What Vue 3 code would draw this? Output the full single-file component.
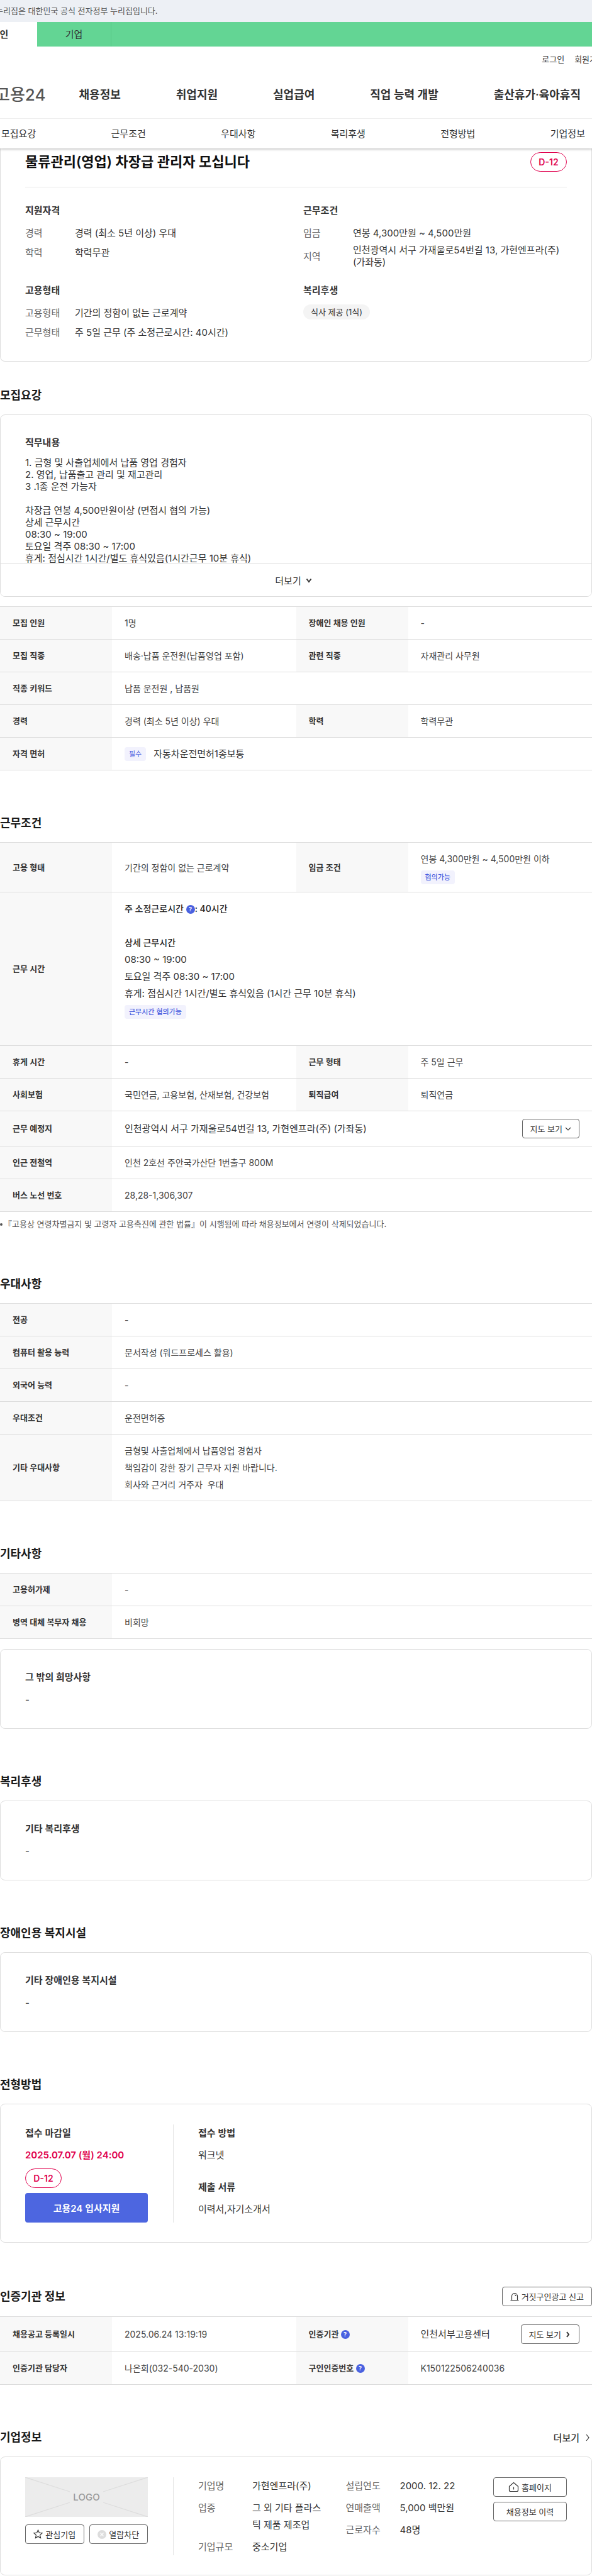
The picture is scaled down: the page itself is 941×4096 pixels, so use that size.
<template>
  <div class="page">
    <header class="header">
      <p class="gov-bar">누리집은 대한민국 공식 전자정부 누리집입니다.</p>

      <div class="member-tabs">
        <a href="#" class="member-tab active">개인</a>
        <a href="#" class="member-tab">기업</a>
      </div>

      <div class="util">
        <a href="#">로그인</a>
        <a href="#">회원가입</a>
      </div>

      <div class="gnb">
        <a href="#" class="logo">고용24</a>
        <nav class="gnb-menu">
          <a v-for="menu in menus" :key="menu" href="#">{{ menu }}</a>
        </nav>
      </div>

      <nav class="anchor-menu">
        <a v-for="anchor in anchors" :key="anchor" href="#">{{ anchor }}</a>
      </nav>
    </header>

    <main>
      <!-- 공고 요약 -->
      <section class="card summary">
        <div class="summary-title">
          <h1>물류관리(영업) 차장급 관리자 모십니다</h1>
          <span class="d-day">D-12</span>
        </div>
        <div class="summary-grid">
          <div v-for="group in summary" :key="group.title">
            <h3>{{ group.title }}</h3>
            <dl v-if="group.rows" class="summary-list">
              <div v-for="row in group.rows" :key="row.label">
                <dt>{{ row.label }}</dt>
                <dd>{{ row.value }}</dd>
              </div>
            </dl>
            <span v-else class="pill">{{ group.tag }}</span>
          </div>
        </div>
      </section>

      <!-- 모집요강 -->
      <section class="section first">
        <h2>모집요강</h2>
        <div class="card duty">
          <div class="duty-body">
            <h3>직무내용</h3>
            <p>{{ dutyText }}</p>
          </div>
          <button type="button" class="more-button">
            더보기
            <svg width="10" height="10" viewBox="0 0 10 10"><path d="M1.5 2.500l3.500 4.500 3.500-4.500" /></svg>
          </button>
        </div>
        <table class="info">
          <colgroup><col class="head" /><col /><col class="head" /><col /></colgroup>
          <tbody>
            <tr>
              <th scope="row">모집 인원</th><td>1명</td>
              <th scope="row">장애인 채용 인원</th><td>-</td>
            </tr>
            <tr>
              <th scope="row">모집 직종</th><td>배송·납품 운전원(납품영업 포함)</td>
              <th scope="row">관련 직종</th><td>자재관리 사무원</td>
            </tr>
            <tr>
              <th scope="row">직종 키워드</th><td colspan="3">납품 운전원 , 납품원</td>
            </tr>
            <tr>
              <th scope="row">경력</th><td>경력 (최소 5년 이상) 우대</td>
              <th scope="row">학력</th><td>학력무관</td>
            </tr>
            <tr>
              <th scope="row">자격 면허</th>
              <td colspan="3">
                <div class="cell-flex">
                  <span class="badge light">필수</span>
                  <span class="large">자동차운전면허1종보통</span>
                </div>
              </td>
            </tr>
          </tbody>
        </table>
      </section>

      <!-- 근무조건 -->
      <section class="section">
        <h2>근무조건</h2>
        <table class="info">
          <colgroup><col class="head" /><col /><col class="head" /><col /></colgroup>
          <tbody>
            <tr>
              <th scope="row">고용 형태</th><td>기간의 정함이 없는 근로계약</td>
              <th scope="row">임금 조건</th>
              <td>
                <p>연봉 4,300만원 ~ 4,500만원 이하</p>
                <span class="badge below">협의가능</span>
              </td>
            </tr>
            <tr>
              <th scope="row">근무 시간</th>
              <td colspan="3">
                <div class="work-time">
                  <p class="strong">주 소정근로시간 <button type="button" class="help">?</button>: 40시간</p>
                  <p class="strong detail">상세 근무시간</p>
                  <p class="large">08:30 ~ 19:00</p>
                  <p class="large">토요일 격주 08:30 ~ 17:00</p>
                  <p class="large">휴게: 점심시간 1시간/별도 휴식있음 (1시간 근무 10분 휴식)</p>
                  <span class="badge below">근무시간 협의가능</span>
                </div>
              </td>
            </tr>
            <tr>
              <th scope="row">휴게 시간</th><td>-</td>
              <th scope="row">근무 형태</th><td>주 5일 근무</td>
            </tr>
            <tr>
              <th scope="row">사회보험</th><td>국민연금, 고용보험, 산재보험, 건강보험</td>
              <th scope="row">퇴직급여</th><td>퇴직연금</td>
            </tr>
            <tr>
              <th scope="row">근무 예정지</th>
              <td colspan="3">
                <div class="cell-flex between">
                  <span class="large">인천광역시 서구 가재울로54번길 13, 가현엔프라(주) (가좌동)</span>
                  <button type="button" class="line-button">
                    지도 보기
                    <svg width="10" height="10" viewBox="0 0 10 10"><path d="M1 3l4 4 4-4" /></svg>
                  </button>
                </div>
              </td>
            </tr>
            <tr>
              <th scope="row">인근 전철역</th><td colspan="3">인천 2호선 주안국가산단 1번출구 800M</td>
            </tr>
            <tr>
              <th scope="row">버스 노선 번호</th><td colspan="3">28,28-1,306,307</td>
            </tr>
          </tbody>
        </table>
        <ul class="note">
          <li>『고용상 연령차별금지 및 고령자 고용촉진에 관한 법률』이 시행됨에 따라 채용정보에서 연령이 삭제되었습니다.</li>
        </ul>
      </section>

      <!-- 우대사항 / 기타사항 -->
      <section class="section">
        <h2>우대사항</h2>
        <table class="info">
          <colgroup><col class="head" /><col /></colgroup>
          <tbody>
            <tr v-for="row in preferences" :key="row.label">
              <th scope="row">{{ row.label }}</th>
              <td><p v-for="line in row.lines" :key="line">{{ line }}</p></td>
            </tr>
          </tbody>
        </table>
      </section>

      <section class="section">
        <h2>기타사항</h2>
        <table class="info">
          <colgroup><col class="head" /><col /></colgroup>
          <tbody>
            <tr><th scope="row">고용허가제</th><td>-</td></tr>
            <tr><th scope="row">병역 대체 복무자 채용</th><td>비희망</td></tr>
          </tbody>
        </table>
        <div class="card simple after-table">
          <h3>그 밖의 희망사항</h3>
          <p>-</p>
        </div>
      </section>

      <section class="section">
        <h2>복리후생</h2>
        <div class="card simple">
          <h3>기타 복리후생</h3>
          <p>-</p>
        </div>
      </section>

      <section class="section">
        <h2>장애인용 복지시설</h2>
        <div class="card simple">
          <h3>기타 장애인용 복지시설</h3>
          <p>-</p>
        </div>
      </section>

      <!-- 전형방법 -->
      <section class="section">
        <h2>전형방법</h2>
        <div class="card split">
          <div class="split-left">
            <h3>접수 마감일</h3>
            <p class="deadline">2025.07.07 (월) 24:00</p>
            <span class="d-day">D-12</span>
            <button type="button" class="apply">고용24 입사지원</button>
          </div>
          <div class="split-right apply-info">
            <div>
              <h3>접수 방법</h3>
              <p>워크넷</p>
            </div>
            <div>
              <h3>제출 서류</h3>
              <p>이력서,자기소개서</p>
            </div>
          </div>
        </div>
      </section>

      <!-- 인증기관 정보 -->
      <section class="section">
        <div class="section-head">
          <h2>인증기관 정보</h2>
          <button type="button" class="line-button">
            <svg width="14" height="14" viewBox="0 0 14 14"><path d="M2.500 12V6a4.500 4.500 0 0 1 9 0v6M.5 12.500h13M7 4a2 2 0 0 1 2 2" /></svg>
            거짓구인광고 신고
          </button>
        </div>
        <table class="info">
          <colgroup><col class="head" /><col /><col class="head" /><col /></colgroup>
          <tbody>
            <tr>
              <th scope="row">채용공고 등록일시</th><td>2025.06.24 13:19:19</td>
              <th scope="row">인증기관 <button type="button" class="help">?</button></th>
              <td>
                <div class="cell-flex between">
                  <span class="large">인천서부고용센터</span>
                  <button type="button" class="line-button">
                    지도 보기
                    <svg class="bold" width="12" height="12" viewBox="0 0 12 12"><path d="M5 2l3 4-3 4" /></svg>
                  </button>
                </div>
              </td>
            </tr>
            <tr>
              <th scope="row">인증기관 담당자</th><td>나은희(032-540-2030)</td>
              <th scope="row">구인인증번호 <button type="button" class="help">?</button></th><td>K150122506240036</td>
            </tr>
          </tbody>
        </table>
      </section>

      <!-- 기업정보 -->
      <section class="section">
        <div class="section-head">
          <h2>기업정보</h2>
          <a href="#" class="more-link">
            더보기
            <svg width="14" height="14" viewBox="0 0 14 14"><path d="M5 2l4 5-4 5" /></svg>
          </a>
        </div>
        <div class="card split company">
          <div class="split-left">
            <div class="logo-box">
              <svg viewBox="0 0 195 63" preserveAspectRatio="none"><path d="M0 0l71 23M195 0l-71 23M0 63l71-23M195 63l-71-23" /></svg>
              <span>LOGO</span>
            </div>
            <div class="logo-buttons">
              <button type="button" class="line-button">
                <svg width="15" height="15" viewBox="0 0 15 15"><path d="M7.500 1l1.900 4.300 4.600.5-3.400 3.100.9 4.600-4-2.300-4 2.300.9-4.600L1 5.800l4.600-.5z" /></svg>
                관심기업
              </button>
              <button type="button" class="line-button">
                <svg class="block-icon" width="14" height="14" viewBox="0 0 14 14"><circle cx="7" cy="7" r="7" /><path d="M4.500 4.500l5 5M9.500 4.500l-5 5" /></svg>
                열람차단
              </button>
            </div>
          </div>
          <div class="split-right company-info">
            <dl v-for="(list, i) in company" :key="i">
              <div v-for="row in list" :key="row.label">
                <dt>{{ row.label }}</dt>
                <dd>{{ row.value }}</dd>
              </div>
            </dl>
            <div class="company-buttons">
              <button type="button" class="line-button">
                <svg width="17" height="17" viewBox="0 0 17 17"><path d="M1.500 7.500v6a2 2 0 0 0 2 2h10a2 2 0 0 0 2-2v-6L8.500 1.500zM8.500 8.500v4" /></svg>
                홈페이지
              </button>
              <button type="button" class="line-button">채용정보 이력</button>
            </div>
          </div>
        </div>
      </section>
    </main>
  </div>
</template>

<script setup>
const menus = ['채용정보', '취업지원', '실업급여', '직업 능력 개발', '출산휴가·육아휴직']
const anchors = ['모집요강', '근무조건', '우대사항', '복리후생', '전형방법', '기업정보']

// 상단 요약 영역
const summary = [
  {
    title: '지원자격',
    rows: [
      { label: '경력', value: '경력 (최소 5년 이상) 우대' },
      { label: '학력', value: '학력무관' }
    ]
  },
  {
    title: '근무조건',
    rows: [
      { label: '임금', value: '연봉 4,300만원 ~ 4,500만원' },
      { label: '지역', value: '인천광역시 서구 가재울로54번길 13, 가현엔프라(주) (가좌동)' }
    ]
  },
  {
    title: '고용형태',
    rows: [
      { label: '고용형태', value: '기간의 정함이 없는 근로계약' },
      { label: '근무형태', value: '주 5일 근무 (주 소정근로시간: 40시간)' }
    ]
  },
  { title: '복리후생', tag: '식사 제공 (1식)' }
]

// 줄바꿈은 white-space: pre-line 으로 표시
const dutyText = `1. 금형 및 사출업체에서 납품 영업 경험자
2. 영업, 납품출고 관리 및 재고관리
3 .1종 운전 가능자

차장급 연봉 4,500만원이상 (면접시 협의 가능)
상세 근무시간
08:30 ~ 19:00
토요일 격주 08:30 ~ 17:00
휴게: 점심시간 1시간/별도 휴식있음(1시간근무 10분 휴식)`

const preferences = [
  { label: '전공', lines: ['-'] },
  { label: '컴퓨터 활용 능력', lines: ['문서작성 (워드프로세스 활용)'] },
  { label: '외국어 능력', lines: ['-'] },
  { label: '우대조건', lines: ['운전면허증'] },
  {
    label: '기타 우대사항',
    lines: ['금형및 사출업체에서 납품영업 경험자', '책임감이 강한 장기 근무자 지원 바랍니다.', '회사와 근거리 거주자\u00a0 우대']
  }
]

const company = [
  [
    { label: '기업명', value: '가현엔프라(주)' },
    { label: '업종', value: '그 외 기타 플라스틱 제품 제조업' },
    { label: '기업규모', value: '중소기업' }
  ],
  [
    { label: '설립연도', value: '2000. 12. 22' },
    { label: '연매출액', value: '5,000 백만원' },
    { label: '근로자수', value: '48명' }
  ]
]
</script>

<style>
body {
  margin: 0;
  background: #fff;
}
</style>

<style scoped>
.page {
  overflow: hidden;
  font-family: Inter, "Noto Sans CJK KR", sans-serif;
  font-size: 15px;
  line-height: 27px;
  color: #333;
}

h1,
h2,
h3,
p,
dl,
dd,
ul {
  margin: 0;
  padding: 0;
}

a {
  color: inherit;
  text-decoration: none;
}

button {
  padding: 0;
  font-family: inherit;
  color: #333;
  background: #fff;
  border: none;
  cursor: pointer;
}

svg {
  fill: none;
  stroke: #333;
  stroke-width: 1.2;
}

/* 헤더 */
.header {
  position: relative;
  white-space: nowrap;
  background: #fff;
  box-shadow: 0 1px 4px rgba(0, 0, 0, 0.3);
}

.gov-bar {
  height: 35px;
  text-indent: -7px;
  font-size: 13px;
  line-height: 35px;
  color: #555;
  background: #edf0f5;
}

.member-tabs {
  display: flex;
  background: #63d594;
}

.member-tab {
  box-sizing: border-box;
  width: 118px;
  border-right: 1px solid #57c586;
  line-height: 39px;
  text-align: center;
}

.member-tab.active {
  margin-left: -59px;
  border-color: #fff;
  font-weight: 600;
  background: #fff;
}

.util {
  display: flex;
  justify-content: flex-end;
  gap: 16px;
  margin-right: -20px;
  padding-top: 10px;
  font-size: 13px;
  line-height: 20px;
}

.gnb {
  display: flex;
  align-items: center;
  gap: 53px;
  padding: 33px 0 23px;
  line-height: 28px;
  border-bottom: 1px solid #eee;
}

.logo {
  margin-left: -8px;
  font-size: 26px;
  font-weight: 500;
  color: #555;
}

.gnb-menu {
  display: flex;
  gap: 88px;
  font-size: 18px;
  font-weight: 600;
  color: #333;
}

.anchor-menu {
  display: flex;
  justify-content: space-between;
  padding: 0 11px 0 2px;
  line-height: 47px;
}

/* 공통 */
.card {
  box-sizing: border-box;
  border: 1px solid #ddd;
  border-radius: 8px;
}

.section {
  margin-top: 70px;
}

.section.first {
  margin-top: 40px;
}

h2 {
  margin-bottom: 16px;
  font-size: 18px;
  line-height: 28px;
  font-weight: 600;
  color: #1a1a1a;
}

h3 {
  font-size: 15px;
  line-height: 20px;
  font-weight: 600;
}

.section-head {
  display: flex;
  justify-content: space-between;
  align-items: center;
  margin-bottom: 16px;
}

.section-head h2 {
  margin: 0;
}

.d-day {
  box-sizing: border-box;
  width: 58px;
  height: 31px;
  border: 1px solid #e0004d;
  border-radius: 16px;
  font-size: 14px;
  line-height: 29px;
  font-weight: 600;
  text-align: center;
  color: #e0004d;
}

.badge {
  display: inline-block;
  padding: 0 7px;
  border-radius: 4px;
  font-size: 11px;
  line-height: 22px;
  font-weight: 500;
  color: #4a5fe0;
  background: #f2f2fd;
}

.badge.light {
  font-weight: 400;
}

.badge.below {
  display: block;
  width: fit-content;
  margin-top: 5px;
}

.line-button {
  display: flex;
  align-items: center;
  justify-content: center;
  gap: 4px;
  box-sizing: border-box;
  height: 31px;
  padding: 0 12px;
  border: 1px solid #666;
  border-radius: 4px;
  font-size: 13px;
  white-space: nowrap;
}

.line-button .bold {
  stroke-width: 2;
}

.help {
  width: 14px;
  height: 14px;
  border-radius: 50%;
  font-size: 9px;
  line-height: 14px;
  font-weight: 700;
  vertical-align: middle;
  color: #fff;
  background: #4a61e0;
}

/* 공고 요약 */
.summary {
  padding: 6px 39px 32px;
  border-top: none;
  border-radius: 0 0 8px 8px;
}

.summary-title {
  display: flex;
  justify-content: space-between;
  align-items: center;
  padding-bottom: 24px;
  border-bottom: 1px solid #e5e5e5;
}

h1 {
  font-size: 22px;
  line-height: 31px;
  font-weight: 600;
  color: #111;
}

.summary-grid {
  display: grid;
  grid-template-columns: 1fr 1fr;
  gap: 26px 23px;
  padding-top: 27px;
}

.summary-list {
  display: flex;
  flex-direction: column;
  gap: 4px;
  margin-top: 12px;
  line-height: 19px;
}

.summary-list div {
  display: flex;
  align-items: center;
  min-height: 27px;
}

.summary-list dt {
  flex: none;
  width: 79px;
  color: #666;
}

.summary-list dd {
  word-break: keep-all;
}

.pill {
  display: inline-block;
  margin-top: 12px;
  padding: 0 12px;
  border-radius: 12px;
  font-size: 13px;
  line-height: 24px;
  background: #f4f4f4;
}

/* 모집요강 */
.duty {
  margin-bottom: 15px;
  overflow: hidden;
}

.duty-body {
  box-sizing: border-box;
  max-height: 236px;
  padding: 34px 39px 0;
  overflow: hidden;
}

.duty-body p {
  margin-top: 12px;
  line-height: 19px;
  white-space: pre-line;
}

.more-button {
  display: flex;
  align-items: center;
  justify-content: center;
  gap: 7px;
  width: 100%;
  height: 52px;
  padding-right: 8px;
  border-top: 1px solid #ddd;
  font-size: 15px;
}

.more-button svg {
  stroke-width: 2;
}

/* 정보 표 */
.info {
  width: 100%;
  table-layout: fixed;
  border-spacing: 0;
  border-top: 1px solid #ddd;
}

.info .head {
  width: 178px;
}

.info th,
.info td {
  padding: 12px 20px;
  border-bottom: 1px solid #ddd;
  font-size: 14px;
  text-align: left;
  vertical-align: middle;
}

.info th {
  font-size: 13px;
  font-weight: 600;
  background: #f8f8f8;
}

.info td {
  color: #444;
}

.info .large {
  font-size: 15px;
  color: #333;
}

.cell-flex {
  display: flex;
  align-items: center;
  gap: 12px;
}

.cell-flex.between {
  justify-content: space-between;
}

.work-time {
  padding-bottom: 30px;
}

.work-time .strong {
  font-weight: 500;
  color: #222;
}

.work-time .detail {
  margin-top: 27px;
}

.note {
  margin-top: 8px;
  font-size: 13px;
  line-height: 23px;
  color: #555;
  list-style: none;
}

.note li {
  display: flex;
  align-items: center;
  gap: 2px;
}

.note li::before {
  content: "";
  width: 4px;
  height: 4px;
  border-radius: 50%;
  background: #555;
}

/* 단순 카드 */
.simple {
  padding: 34px 39px 32px;
}

.simple.after-table {
  margin-top: 16px;
}

.simple p {
  margin-top: 12px;
}

/* 좌우 분할 카드 */
.split {
  display: flex;
  padding: 32px 39px 31px;
}

.split h3 {
  line-height: 27px;
}

.split-left {
  flex: none;
  display: flex;
  flex-direction: column;
  gap: 8px;
  width: 195px;
  padding-right: 40px;
}

.split-right {
  flex: 1;
  padding-left: 39px;
  border-left: 1px solid #e5e5e5;
}

.deadline {
  font-weight: 600;
  color: #e0004d;
}

.apply {
  height: 47px;
  border-radius: 4px;
  font-size: 15px;
  font-weight: 600;
  color: #fff;
  background: #4d66e0;
}

.apply-info {
  display: flex;
  flex-direction: column;
  gap: 24px;
}

.apply-info p {
  margin-top: 8px;
}

/* 기업정보 */
.more-link {
  display: flex;
  align-items: center;
  gap: 6px;
  font-weight: 500;
}

.company .split-left {
  gap: 12px;
}

.logo-box {
  display: grid;
  place-items: center;
  height: 63px;
  background: #ececec;
}

.logo-box svg,
.logo-box span {
  grid-area: 1 / 1;
}

.logo-box svg {
  width: 100%;
  height: 63px;
  stroke: #ddd;
}

.logo-box span {
  font-size: 15px;
  font-weight: 500;
  color: #999;
}

.logo-buttons {
  display: flex;
  gap: 8px;
}

.logo-buttons .line-button {
  flex: 1;
  padding: 0;
}

.block-icon circle {
  fill: #ddd;
  stroke: none;
}

.block-icon path {
  stroke: #fff;
}

.company-info {
  display: flex;
}

.company-info dl {
  flex: 1;
  display: flex;
  flex-direction: column;
  gap: 8px;
  padding-right: 36px;
}

.company-info dl div {
  display: flex;
}

.company-info dt {
  flex: none;
  width: 86px;
  color: #666;
}

.company-info dd {
  word-break: break-all;
}

.company-buttons {
  flex: none;
  display: flex;
  flex-direction: column;
  gap: 8px;
  width: 117px;
}
</style>
